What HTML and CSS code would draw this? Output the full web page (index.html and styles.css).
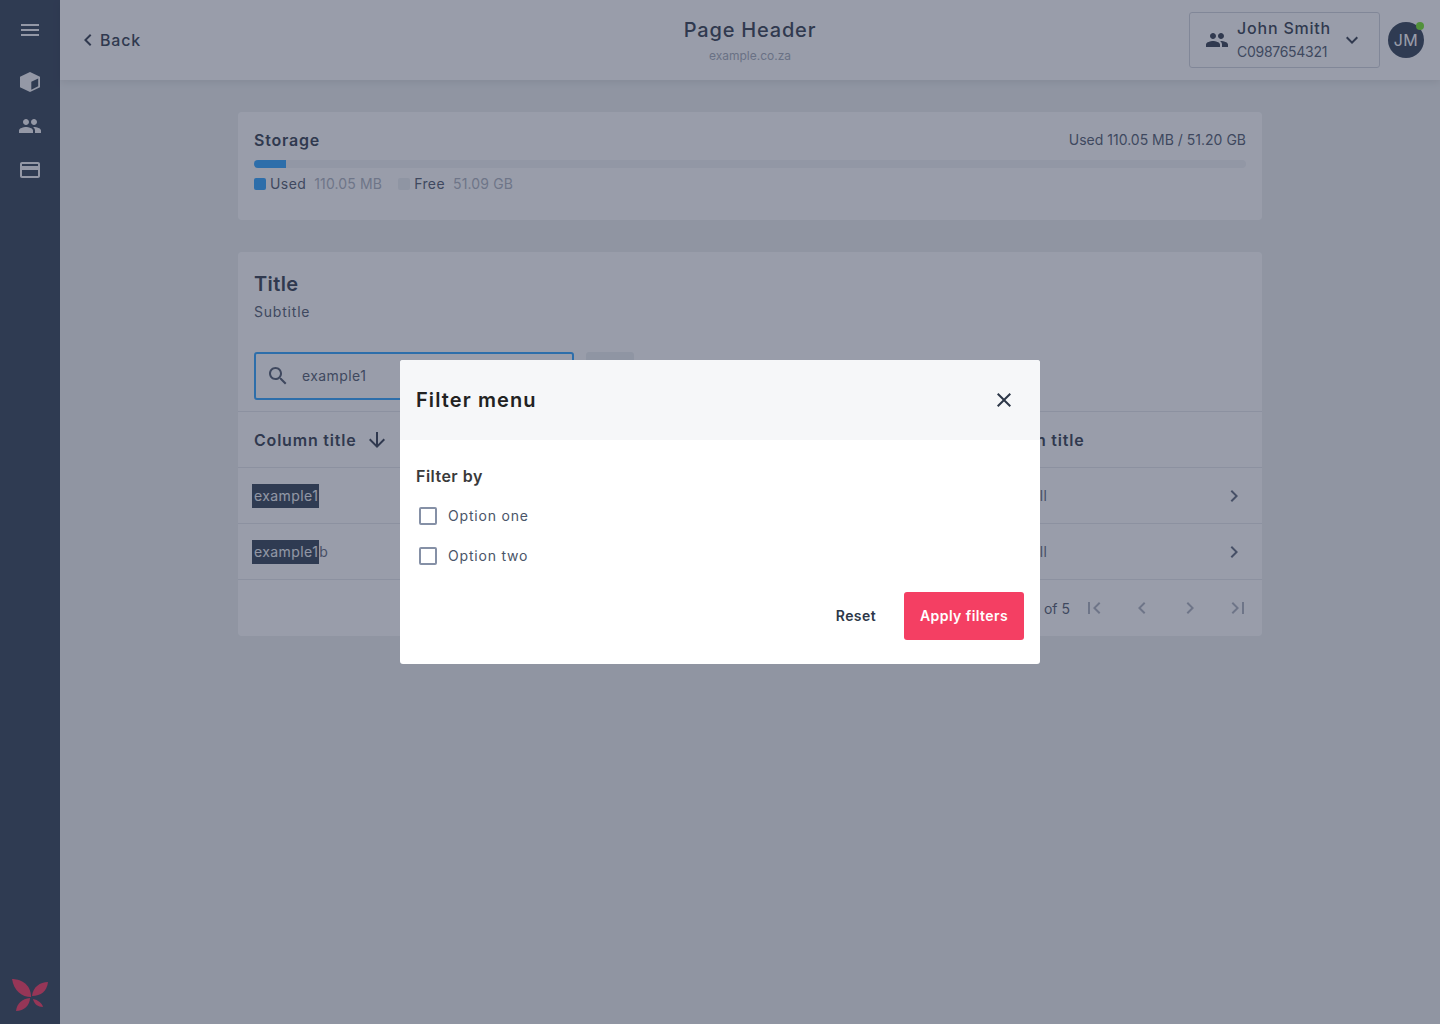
FILE: index.html
```html
<!DOCTYPE html>
<html lang="en">
<head>
  <meta charset="UTF-8">
  <meta name="viewport" content="width=device-width, initial-scale=1.0">
  <title>Page Header</title>
  <link rel="stylesheet" href="styles.css">
</head>
<body>
  <nav class="sidebar">
    <div class="side-top">
      <svg class="icon" viewBox="0 0 24 24"><path d="M3 18h18v-2H3v2zm0-5h18v-2H3v2zm0-7v2h18V6H3z"/></svg>
    </div>
    <div class="side-links">
      <svg class="icon" viewBox="0 0 24 24"><path fill-rule="evenodd" d="M12 2l10 4.800v10.400L12 22 2 17.200V6.800L12 2zm1.300 9.700v8l6.900-3.400V8.400l-6.900 3.300z"/></svg>
      <svg class="icon" viewBox="0 0 24 24"><path d="M16 11c1.660 0 2.990-1.340 2.990-3S17.660 5 16 5c-1.660 0-3 1.340-3 3s1.340 3 3 3zm-8 0c1.660 0 2.990-1.340 2.990-3S9.660 5 8 5C6.340 5 5 6.340 5 8s1.340 3 3 3zm0 2c-2.330 0-7 1.170-7 3.500V19h14v-2.500c0-2.330-4.670-3.500-7-3.500zm8 0c-.29 0-.62.020-.97.050 1.160.84 1.970 1.970 1.970 3.450V19h6v-2.500c0-2.330-4.670-3.500-7-3.500z"/></svg>
      <svg class="icon" viewBox="0 0 24 24"><path d="M20 4H4c-1.110 0-1.990.89-1.990 2L2 18c0 1.110.89 2 2 2h16c1.110 0 2-.89 2-2V6c0-1.110-.89-2-2-2zm0 14H4v-6h16v6zm0-10H4V6h16v2z"/></svg>
    </div>
    <svg class="logo" viewBox="0 0 36 36">
      <path d="M0 2C7 2 19 6 19 20 10 20 2 14 0 2z"/>
      <path d="M36 5C28 5 21 10 20 19 29 19 35 14 36 5z"/>
      <path d="M4 34C5 26 10 22 18 21 18 28 12 34 4 34z"/>
      <path d="M21 22C26 23 30 26 31 30 26 30 22 27 21 22z"/>
    </svg>
  </nav>

  <div class="page">
    <header class="topbar">
      <a class="back">
        <svg class="icon" viewBox="0 0 24 24"><path d="M15.410 7.410L14 6l-6 6 6 6 1.410-1.410L10.830 12z"/></svg>
        Back
      </a>
      <div class="page-title">
        <h1>Page Header</h1>
        <p>example.co.za</p>
      </div>
      <div class="top-right">
        <div class="account">
          <svg class="icon" viewBox="0 0 24 24"><path d="M16 11c1.660 0 2.990-1.340 2.990-3S17.660 5 16 5c-1.660 0-3 1.340-3 3s1.340 3 3 3zm-8 0c1.660 0 2.990-1.340 2.990-3S9.660 5 8 5C6.340 5 5 6.340 5 8s1.340 3 3 3zm0 2c-2.330 0-7 1.170-7 3.500V19h14v-2.500c0-2.330-4.670-3.500-7-3.500zm8 0c-.29 0-.62.020-.97.050 1.160.84 1.970 1.970 1.970 3.450V19h6v-2.500c0-2.330-4.670-3.500-7-3.500z"/></svg>
          <div class="account-text">
            <span class="account-name">John Smith</span>
            <span class="account-code">C0987654321</span>
          </div>
          <svg class="icon" viewBox="0 0 24 24"><path d="M7.410 8.590L12 13.170l4.590-4.580L18 10l-6 6-6-6z"/></svg>
        </div>
        <div class="avatar">JM<span class="status"></span></div>
      </div>
    </header>

    <main class="content">
      <section class="card storage">
        <div class="storage-head">
          <h2>Storage</h2>
          <span>Used 110.05 MB / 51.20 GB</span>
        </div>
        <div class="bar"><div class="bar-used"></div></div>
        <div class="legend">
          <span class="swatch swatch-used"></span>
          <span class="legend-label">Used</span>
          <span class="legend-value">110.05 MB</span>
          <span class="swatch swatch-free"></span>
          <span class="legend-label">Free</span>
          <span class="legend-value">51.09 GB</span>
        </div>
      </section>

      <section class="card listing">
        <div class="listing-head">
          <h2>Title</h2>
          <p>Subtitle</p>
        </div>
        <div class="tools">
          <div class="search">
            <svg class="icon" viewBox="0 0 24 24"><path d="M15.500 14h-.79l-.28-.27C15.410 12.590 16 11.110 16 9.500 16 5.910 13.090 3 9.500 3S3 5.910 3 9.500 5.910 16 9.500 16c1.610 0 3.090-.59 4.230-1.570l.27.28v.79l5 4.990L20.490 19l-4.990-5zm-6 0C7.010 14 5 11.990 5 9.500S7.010 5 9.500 5 14 7.010 14 9.500 11.990 14 9.500 14z"/></svg>
            <span>example1</span>
          </div>
          <div class="filter-btn"></div>
        </div>
        <div class="row row-head">
          <div class="sort">Column title
            <svg class="icon" viewBox="0 0 24 24"><path d="M20 12l-1.410-1.410L13 16.170V4h-2v12.170l-5.580-5.590L4 12l8 8 8-8z"/></svg>
          </div>
          <div>Column title</div>
          <div></div>
        </div>
        <div class="row">
          <div><mark>example1</mark></div>
          <div class="cell">Table cell</div>
          <svg class="icon" viewBox="0 0 24 24"><path d="M10 6L8.590 7.410 13.170 12l-4.580 4.590L10 18l6-6z"/></svg>
        </div>
        <div class="row">
          <div><mark>example1</mark>b</div>
          <div class="cell">Table cell</div>
          <svg class="icon" viewBox="0 0 24 24"><path d="M10 6L8.590 7.410 13.170 12l-4.580 4.590L10 18l6-6z"/></svg>
        </div>
        <div class="pager">
          <span class="pager-count">1-5 of 5</span>
          <span class="pager-btn"><svg class="icon" viewBox="0 0 24 24"><path d="M18.410 16.590L13.820 12l4.590-4.590L17 6l-6 6 6 6zM6 6h2v12H6z"/></svg></span>
          <span class="pager-btn"><svg class="icon" viewBox="0 0 24 24"><path d="M15.410 7.410L14 6l-6 6 6 6 1.410-1.410L10.830 12z"/></svg></span>
          <span class="pager-btn"><svg class="icon" viewBox="0 0 24 24"><path d="M10 6L8.590 7.410 13.170 12l-4.580 4.590L10 18l6-6z"/></svg></span>
          <span class="pager-btn"><svg class="icon" viewBox="0 0 24 24"><path d="M5.590 7.410L10.180 12l-4.590 4.590L7 18l6-6-6-6zM16 6h2v12h-2z"/></svg></span>
        </div>
      </section>
    </main>
  </div>

  <div class="overlay">
    <div class="modal">
      <div class="modal-head">
        <h3>Filter menu</h3>
        <svg class="icon" viewBox="0 0 24 24"><path d="M19 6.410L17.590 5 12 10.590 6.410 5 5 6.410 10.590 12 5 17.590 6.410 19 12 13.410 17.590 19 19 17.590 13.410 12z"/></svg>
      </div>
      <div class="modal-body">
        <h4>Filter by</h4>
        <label class="option"><input type="checkbox">Option one</label>
        <label class="option"><input type="checkbox">Option two</label>
        <div class="modal-actions">
          <button class="btn-reset">Reset</button>
          <button class="btn-apply">Apply filters</button>
        </div>
      </div>
    </div>
  </div>
</body>
</html>
```

FILE: styles.css
```css
* {
  box-sizing: border-box;
}

body {
  display: flex;
  height: 100vh;
  margin: 0;
  overflow: hidden;
  font-family: Inter, "Liberation Sans", sans-serif;
  letter-spacing: 0.05em;
  color: #2d3748;
  background-color: #ecefef;
}

h1, h2, h3, h4, p {
  margin: 0;
}

.icon {
  display: block;
  flex: none;
  width: 24px;
  height: 24px;
  fill: currentColor;
}

/* Sidebar */
.sidebar {
  display: flex;
  flex: none;
  flex-direction: column;
  align-items: center;
  width: 60px;
  color: #f4f5f7;
  background-color: #2b3a4f;
}

.side-top {
  display: flex;
  align-items: center;
  justify-content: center;
  width: 100%;
  height: 60px;
}

.side-links {
  display: flex;
  flex-direction: column;
  gap: 20px;
  margin-top: 10px;
}

.logo {
  width: 36px;
  height: 36px;
  margin-top: auto;
  margin-bottom: 11px;
  fill: #f93058;
}

/* Top bar */
.page {
  flex: 1;
  min-width: 0;
}

.topbar {
  display: grid;
  grid-template-columns: 1fr auto 1fr;
  align-items: center;
  height: 80px;
  padding: 2px 16px 0;
  background-color: #ffffff;
  box-shadow: 0 2px 8px rgba(0, 0, 0, 0.1);
}

.back {
  display: flex;
  align-items: center;
  margin-top: -2px;
  font-size: 16px;
  font-weight: 500;
}

.page-title {
  text-align: center;
}

.page-title h1 {
  font-size: 20px;
  font-weight: 500;
  line-height: 24px;
}

.page-title p {
  margin-top: 6px;
  font-size: 12px;
  line-height: 16px;
  letter-spacing: 0;
  color: #a0a7b4;
}

.top-right {
  display: flex;
  align-items: center;
  justify-content: flex-end;
  gap: 8px;
  margin-top: -2px;
}

.account {
  display: flex;
  align-items: center;
  width: 191px;
  height: 56px;
  padding: 0 15px;
  border: 1px solid #cfd3da;
  border-radius: 3px;
}

.account-text {
  display: flex;
  flex-direction: column;
  flex: 1;
  margin-left: 8px;
}

.account-name {
  font-size: 16px;
  font-weight: 500;
  line-height: 24px;
}

.account-code {
  font-size: 14px;
  line-height: 24px;
  letter-spacing: -0.02em;
  color: #4a5568;
}

.avatar {
  position: relative;
  display: flex;
  flex: none;
  align-items: center;
  justify-content: center;
  width: 36px;
  height: 36px;
  font-size: 16px;
  font-weight: 400;
  letter-spacing: 0.03em;
  color: #ffffff;
  border-radius: 50%;
  background-color: #2b3a4f;
}

.status {
  position: absolute;
  top: 0;
  right: 0;
  width: 8px;
  height: 8px;
  border-radius: 50%;
  background-color: #6fe61f;
}

/* Cards */
.content {
  display: flex;
  flex-direction: column;
  gap: 32px;
  width: 1024px;
  margin: 32px auto 0;
}

.card {
  border-radius: 4px;
  background-color: #ffffff;
}

.storage {
  height: 108px;
  padding: 16px;
}

.storage-head {
  display: flex;
  align-items: center;
  justify-content: space-between;
  height: 24px;
  font-size: 14px;
  letter-spacing: 0;
  color: #4a5568;
}

.storage-head span,
.legend-label,
.legend-value,
.search span {
  padding-bottom: 2px;
}

.storage-head h2 {
  font-size: 16px;
  font-weight: 600;
  letter-spacing: 0.05em;
  color: #2d3748;
}

.bar {
  height: 8px;
  margin-top: 8px;
  border-radius: 4px;
  background-color: #f0f2f4;
}

.bar-used {
  width: 32px;
  height: 8px;
  border-radius: 4px 0 0 4px;
  background-color: #27a0ff;
}

.legend {
  display: flex;
  align-items: center;
  height: 16px;
  margin-top: 8px;
  font-size: 14px;
}

.swatch {
  flex: none;
  width: 12px;
  height: 12px;
  margin-right: 4px;
  border-radius: 2px;
}

.swatch-used {
  background-color: #27a0ff;
}

.swatch-free {
  background-color: #ebeef0;
}

.legend-label {
  margin-right: 8px;
  letter-spacing: 0.03em;
  color: #4a5568;
}

.legend-value {
  margin-right: 16px;
  letter-spacing: 0.01em;
  color: #a9afbb;
}

.listing-head {
  padding: 16px 16px 0;
}

.listing-head h2 {
  font-size: 20px;
  font-weight: 600;
  line-height: 32px;
  letter-spacing: 0.02em;
}

.listing-head p {
  font-size: 14px;
  line-height: 24px;
  color: #4a5568;
}

.tools {
  display: flex;
  gap: 12px;
  margin: 28px 16px 11px;
}

.search {
  display: flex;
  align-items: center;
  gap: 12px;
  width: 320px;
  height: 48px;
  padding: 0 10px;
  font-size: 14px;
  letter-spacing: 0.03em;
  color: #4a5568;
  border: 2px solid #27a0ff;
  border-radius: 3px;
}

.filter-btn {
  width: 48px;
  height: 48px;
  border-radius: 3px;
  background-color: #ebeef0;
}

.row {
  display: grid;
  grid-template-columns: 1fr 240px 24px;
  align-items: center;
  height: 56px;
  padding: 0 16px;
  font-size: 14px;
  letter-spacing: 0.03em;
  color: #5a6578;
  border-top: 1px solid #e5e7eb;
}

.row .cell {
  letter-spacing: 0.015em;
}

.row-head {
  font-size: 16px;
  font-weight: 600;
  letter-spacing: 0.05em;
  color: #2d3748;
}

.sort {
  display: flex;
  align-items: center;
  gap: 8px;
}

mark {
  display: inline-block;
  margin-left: -2px;
  padding: 0 1px 0 2px;
  line-height: 24px;
  color: #f0f2f5;
  background-color: #2b3a4f;
}

.pager {
  display: flex;
  align-items: center;
  justify-content: flex-end;
  height: 57px;
  font-size: 14px;
  letter-spacing: 0;
  color: #4a5568;
  border-top: 1px solid #e5e7eb;
}

.pager-btn {
  display: flex;
  align-items: center;
  justify-content: center;
  width: 48px;
  color: #a9afbb;
}

/* Modal */
.overlay {
  position: fixed;
  inset: 0;
  display: flex;
  align-items: center;
  justify-content: center;
  background-color: rgba(51, 60, 85, 0.5);
}

.modal {
  width: 640px;
  overflow: hidden;
  border-radius: 3px;
  background-color: #ffffff;
}

.modal-head {
  display: flex;
  align-items: center;
  justify-content: space-between;
  height: 80px;
  padding: 0 24px 0 16px;
  color: #2d3748;
  background-color: #f6f7f9;
}

.modal-head h3 {
  font-size: 20px;
  font-weight: 600;
  letter-spacing: 0.055em;
  color: #222222;
}

.modal-body {
  padding: 24px 16px;
}

.modal-body h4 {
  font-size: 16px;
  font-weight: 600;
  line-height: 24px;
  letter-spacing: 0.03em;
  color: #3a3a3a;
}

.option {
  display: flex;
  align-items: center;
  height: 40px;
  padding: 0 0 2px 3px;
  font-size: 14px;
  color: #4a5568;
}

.modal-body h4 + .option {
  margin-top: 8px;
}

.option input {
  width: 18px;
  height: 18px;
  margin: 2px 11px 0 0;
  border: 2px solid #8590a6;
  border-radius: 2px;
  appearance: none;
}

.modal-actions {
  display: flex;
  align-items: center;
  justify-content: flex-end;
  gap: 28px;
  margin-top: 16px;
}

.modal-actions button {
  height: 48px;
  padding: 0 0 2px;
  font-family: inherit;
  font-size: 14px;
  font-weight: 600;
  letter-spacing: 0.03em;
  border: none;
  border-radius: 3px;
}

.btn-reset {
  color: #2d3748;
  background: none;
}

.btn-apply {
  width: 120px;
  color: #ffffff;
  background-color: #f43f63;
}
```
